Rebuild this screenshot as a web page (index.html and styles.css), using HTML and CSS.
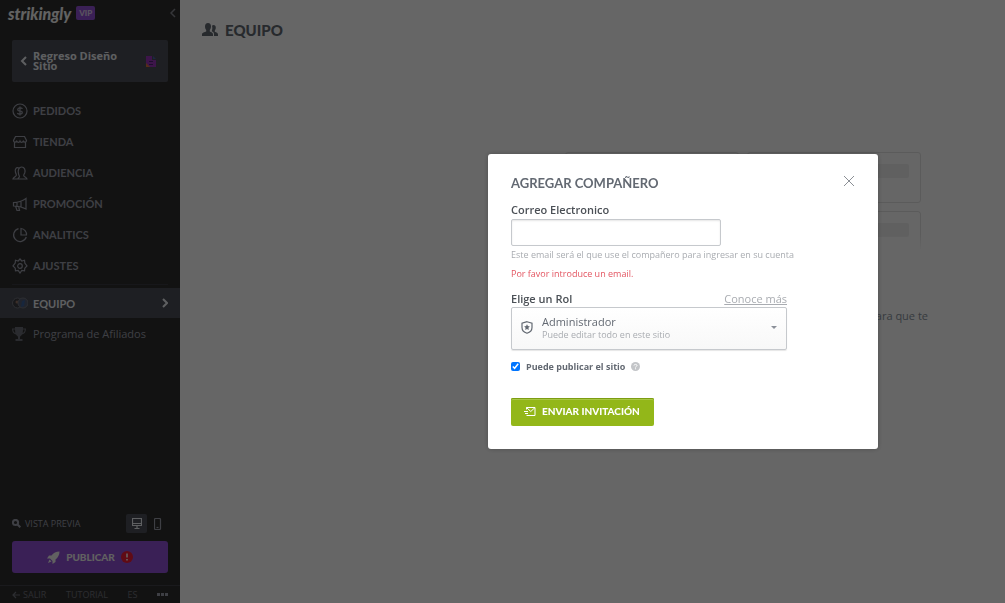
FILE: index.html
```
<!DOCTYPE html>
<html lang="es">
<head>
    <meta charset="UTF-8">
    <meta name="viewport" content="width=device-width, initial-scale=1.0">
    <title>Equipo - Strikingly</title>
    <link rel="stylesheet" href="styles.css">
</head>
<body>
    <div class="app">
        <aside class="sidebar">
            <div class="brand">
                <span class="logo">strikingly</span>
                <span class="vip">VIP</span>
                <button class="collapse" aria-label="Contraer menú">
                    <svg width="6" height="10" viewBox="0 0 6 10"><path d="M5 1L1 5l4 4"/></svg>
                </button>
            </div>

            <a class="site" href="#">
                <svg class="line site-back" width="7" height="10" viewBox="0 0 7 10"><path d="M6 1L2 5l4 4"/></svg>
                <span class="site-name">Regreso Diseño Sitio</span>
                <svg width="10" height="11" viewBox="0 0 10 11">
                    <path fill="#9a35b8" d="M0 0h6v4h4v7H0z"/>
                    <path fill="#d8703c" d="M0 7l4 4H0z"/>
                    <path fill="#4a5fa8" d="M7 0l3 3H7z"/>
                    <path stroke="#4b2473" d="M3 5.500h4M3 8.500h4"/>
                </svg>
            </a>

            <nav class="nav">
                <a class="nav-item" href="#">
                    <svg class="line" width="16" height="16" viewBox="0 0 16 16"><circle cx="8" cy="8" r="7"/><path d="M10.500 5.800C10 5 9 4.900 8 4.900c-3 0-3 3 0 3.100 3 .1 3 3.100 0 3.100-1.200 0-2.200-.2-2.700-1M8 3.500v9"/></svg>
                    PEDIDOS
                </a>
                <a class="nav-item" href="#">
                    <svg class="line" width="16" height="16" viewBox="0 0 16 16"><path d="M3.500 2.500h9l2 4c0 2-2.200 2.200-3.200.6-1 1.600-2.600 1.600-3.300 0-.7 1.600-2.300 1.600-3.300 0-1 1.600-3.200 1.400-3.200-.6zM2.500 8.500v5h11v-5"/></svg>
                    TIENDA
                </a>
                <a class="nav-item" href="#">
                    <svg class="line" width="16" height="16" viewBox="0 0 16 16"><path d="M7.500 11.500c-.2-1-1-1.500-1-3C5.500 5 7 2 9.700 2s4 3 3 6c-.5 1.200-1 1.500-1 2.500 0 1.500 3 1.500 3.300 3.500H6c0-1.200 1.500-1.300 1.500-2.500zM7 3C4.500 1.500 2.500 4 3.500 7.500c.3 1 1 1.500.8 2.800C4 11.500 1.500 12 1 14h5"/></svg>
                    AUDIENCIA
                </a>
                <a class="nav-item" href="#">
                    <svg class="line" width="16" height="16" viewBox="0 0 16 16"><path d="M1.500 6.500v3.500c3 0 7 0 12.500 3V2.500C9 6 5 6.500 1.500 6.500zM9 5v6M3.500 10l1.500 4.500h2.500L6.500 10M5 6.500V10"/></svg>
                    PROMOCIÓN
                </a>
                <a class="nav-item" href="#">
                    <svg class="line" width="16" height="16" viewBox="0 0 16 16"><path d="M6.500 1.700a6.500 6.500 0 1 0 7.800 8.300M9 1.500V8h5.500A6 6 0 0 0 9 1.500z"/></svg>
                    ANALITICS
                </a>
                <a class="nav-item" href="#">
                    <svg class="line" width="16" height="16" viewBox="0 0 16 16"><circle cx="8" cy="8" r="2.300"/><path d="M8 1l1.800 2 2.700-.8.3 2.800L15 8l-2.200 2.200-.3 2.700-2.700-.5L8 15l-1.800-2.600-2.700.5-.3-2.700L1 8l2.200-3 .3-2.800 2.700.8z"/></svg>
                    AJUSTES
                </a>
            </nav>

            <nav class="nav nav-bottom">
                <a class="nav-item active" href="#">
                    <svg width="16" height="12" viewBox="0 0 16 12">
                        <circle cx="5.500" cy="6" r="5" fill="#3d3d42" stroke="#71747e"/>
                        <circle cx="5" cy="5" r="1.500" fill="#967464"/>
                        <circle cx="11" cy="6" r="5" fill="#535b70" stroke="#71747e"/>
                        <path d="M9 10l1-6 3-1-1 6z" fill="#3a5f98"/>
                    </svg>
                    EQUIPO
                    <svg class="line arrow" width="7" height="10" viewBox="0 0 7 10"><path d="M2 1l4 4-4 4"/></svg>
                </a>
                <a class="nav-item plain" href="#">
                    <svg width="14" height="14" viewBox="0 0 14 14"><path fill="#6a6d75" d="M3 0h8v1.500h3C14 5 12.500 7 10 7.500 9 9 8 9 8 10v2h2.500v2h-7v-2H6v-2c0-1-1-1-2-2.500C1.500 7 0 5 0 1.500h3z"/><path fill="#2f2f2f" d="M1.200 2.600C1.400 4.500 2 5.500 3.300 6L3 2.600zM12.800 2.600H11L10.700 6c1.300-.5 1.900-1.500 2.100-3.400z"/></svg>
                    Programa de Afiliados
                </a>
            </nav>

            <div class="preview">
                <a class="preview-link" href="#">
                    <svg width="9" height="9" viewBox="0 0 9 9"><circle cx="3.500" cy="3.500" r="2.600"/><path d="M5.500 5.500L8.300 8.300"/></svg>
                    VISTA PREVIA
                </a>
                <button class="device selected" aria-label="Escritorio">
                    <svg class="line" width="10" height="11" viewBox="0 0 10 11"><path d="M.5.500h9v7h-9zM.5 5.500h9M5 7.500v3M2.500 10.500h5"/></svg>
                </button>
                <button class="device" aria-label="Móvil">
                    <svg class="line" width="8" height="12" viewBox="0 0 8 12"><rect x=".5" y=".5" width="6" height="11" rx="1"/><path d="M2.500 9.500h2"/></svg>
                </button>
            </div>
            <button class="publish">
                <svg width="13" height="13" viewBox="0 0 13 13"><path fill="#f2f2f2" d="M12.500.5C9 .5 6.500 2 4.500 4.500H2L0 7.500h3L5.500 10v3l3-2V8.500C11 6.500 12.500 4 12.500.5zM2.500 8.500L1 12l3.500-1.500z"/></svg>
                PUBLICAR
                <svg width="12" height="12" viewBox="0 0 12 12"><circle cx="6" cy="6" r="6" fill="#f01c35"/><path d="M6 2.500v4M6 8v1.500" stroke="#fff" stroke-width="1.500"/></svg>
            </button>
            <div class="sidebar-foot">
                <a href="#"><svg class="line" width="8" height="8" viewBox="0 0 8 8"><path d="M8 4H1M4 1L1 4l3 3"/></svg>SALIR</a>
                <a href="#">TUTORIAL</a>
                <a href="#">ES</a>
                <button aria-label="Más opciones"><svg width="11" height="3" viewBox="0 0 11 3"><path fill="#9b9eaa" d="M0 0h3v3H0zM4 0h3v3H4zM8 0h3v3H8z"/></svg></button>
            </div>
        </aside>

        <main class="content">
            <h1>
                <svg width="16" height="14" viewBox="0 0 16 14"><path fill="currentColor" d="M6 0c2 0 3 1.500 3 3.500 0 1.500-.6 2.700-1.200 3.500v1.500c1.500.8 3.200 1 3.200 3V13H0v-1.500c0-2 2.500-2.200 4.200-3V7C3.500 6.200 3 5 3 3.500 3 1.500 4 0 6 0zM11.500 2c1.500 0 2.300 1 2.300 2.700 0 1.200-.5 2.100-1 2.700v1.400c1.700.7 3.200 1 3.200 2.700V13h-4v-2c0-1.500-1-2.200-2.300-2.800C10.300 7 10.600 5 10 2.800c.4-.5.9-.8 1.500-.8z"/></svg>
                EQUIPO
            </h1>
            <div class="team-grid">
                <div class="team-card"><span></span></div>
                <div class="team-card"><span></span></div>
                <div class="team-card fade"><span></span></div>
                <div class="team-card fade"><span></span></div>
            </div>
            <p class="team-text">para que te</p>
        </main>
    </div>

    <div class="overlay">
        <form class="modal" role="dialog" aria-labelledby="modal-title">
            <header class="modal-head">
                <h2 id="modal-title">AGREGAR COMPAÑERO</h2>
                <button type="button" class="close" aria-label="Cerrar">
                    <svg width="10" height="10" viewBox="0 0 10 10"><path d="M0 0l10 10M10 0L0 10"/></svg>
                </button>
            </header>

            <label class="field-label" for="email">Correo Electronico</label>
            <input class="email" type="email" id="email">
            <p class="hint">Este email será el que use el compañero para ingresar en su cuenta</p>
            <p class="error">Por favor introduce un email.</p>

            <div class="role">
                <div class="role-head">
                    <label class="field-label" for="role">Elige un Rol</label>
                    <a href="#">Conoce más</a>
                </div>
                <div class="role-box">
                    <svg width="12" height="13" viewBox="0 0 12 13"><path fill="none" stroke="#636972" stroke-width="1.200" d="M6 .7l5 1.500v4.300c0 3-2.500 5-5 5.800-2.500-.8-5-2.800-5-5.800V2.200z"/><path fill="#636972" d="M6 3.200l.9 1.900 2 .3-1.500 1.400.4 2.100L6 7.900l-1.800 1 .4-2.100-1.500-1.400 2-.3z"/></svg>
                    <div class="role-text">
                        <select id="role">
                            <option>Administrador</option>
                        </select>
                        <span>Puede editar todo en este sitio</span>
                    </div>
                    <svg width="6" height="3" viewBox="0 0 6 3"><path fill="#8b9099" d="M0 0h6L3 3z"/></svg>
                </div>
            </div>

            <div class="check">
                <input type="checkbox" id="publish" checked>
                <label for="publish">Puede publicar el sitio</label>
                <svg width="9" height="9" viewBox="0 0 9 9"><circle cx="4.500" cy="4.500" r="4.500" fill="#c3c5c8"/><path fill="none" stroke="#fff" d="M3 3.500c0-1.500 3-1.500 3 0 0 1-1.500.8-1.500 2M4.500 6.300v1"/></svg>
            </div>

            <button type="submit" class="send">
                <svg width="12" height="9" viewBox="0 0 12 9"><path fill="none" stroke="#fff" d="M2.500 2.500v-2h8.500v8H2.500M2.500.5l4.300 4L11 .5M0 4.500h4M1 6.500h3"/></svg>
                ENVIAR INVITACIÓN
            </button>
        </form>
    </div>
</body>
</html>
```
FILE: styles.css
```
* {
    box-sizing: border-box;
}
body {
    margin: 0;
    font-family: "Open Sans", sans-serif;
    font-size: 11px;
    color: #636972;
    background: #fff;
}
button {
    font-family: inherit;
    padding: 0;
    border: none;
    background: none;
    cursor: pointer;
}
a {
    color: inherit;
    text-decoration: none;
}
svg {
    flex: none;
}
.line {
    fill: none;
    stroke: currentColor;
    stroke-width: 1.2;
}
.app {
    display: flex;
    min-height: 100vh;
}

/* sidebar */
.sidebar {
    display: flex;
    flex-direction: column;
    width: 180px;
    background: #2f2f2f;
    color: #9b9eaa;
}
.brand {
    display: flex;
    align-items: center;
    gap: 5px;
    height: 28px;
    padding: 0 4px 2px 8px;
}
.logo {
    font-family: Lato, sans-serif;
    font-size: 16px;
    font-weight: 900;
    font-style: italic;
    color: #f4f4f4;
}
.vip {
    padding: 0 3px;
    border-radius: 2px;
    background: #9251d6;
    color: #e0d2ef;
    font-family: Lato, sans-serif;
    font-size: 8px;
    font-weight: 900;
    line-height: 14px;
}
.collapse {
    margin-left: auto;
}
.collapse svg {
    fill: none;
    stroke: #85878f;
    stroke-width: 1.5;
}
.site {
    display: flex;
    align-items: center;
    height: 42px;
    margin: 12px 12px 13px;
    padding: 0 12px 0 8px;
    border-radius: 2px;
    background: #4b4e58;
    color: #eceef2;
}
.site-back {
    stroke-width: 2;
}
.site-name {
    flex: 1;
    margin: 0 16px 0 6px;
    font-weight: 700;
    line-height: 10px;
}
.nav-item {
    display: flex;
    align-items: center;
    gap: 5px;
    height: 31px;
    padding: 0 12px;
    font-family: Lato, sans-serif;
    font-size: 11px;
    font-weight: 700;
}
.nav-bottom {
    margin-top: 3px;
    padding-top: 4px;
    background: linear-gradient(#3a3b41, #3a3b41) 12px 0 / 156px 1px no-repeat;
}
.nav-item.active {
    height: 30px;
    background: #4b4e58;
    color: #eceef2;
}
.arrow {
    margin-left: auto;
    stroke-width: 2;
}
.nav-item.plain {
    gap: 7px;
    font-family: "Open Sans", sans-serif;
    font-size: 11px;
    font-weight: 400;
}
.preview {
    display: flex;
    align-items: center;
    margin: auto 12px 8px;
}
.preview-link {
    display: flex;
    flex: 1;
    align-items: center;
    gap: 4px;
    font-size: 9px;
}
.preview-link svg {
    fill: none;
    stroke: currentColor;
    stroke-width: 2;
}
.device {
    display: flex;
    align-items: center;
    justify-content: center;
    width: 21px;
    height: 19px;
    border-radius: 2px;
    color: #9b9eaa;
}
.device.selected {
    background: #4b4e58;
    color: #eceef2;
}
.publish {
    display: flex;
    align-items: center;
    justify-content: center;
    gap: 6px;
    height: 32px;
    margin: 0 12px 12px;
    border-radius: 3px;
    background: #9251d6;
    color: #f2f2f2;
    font-family: Lato, sans-serif;
    font-size: 10px;
    font-weight: 900;
}
.sidebar-foot {
    display: flex;
    align-items: center;
    justify-content: space-between;
    height: 18px;
    padding: 0 12px;
    border-top: 1px solid #42434a;
    color: #6f717a;
    font-size: 9px;
}
.sidebar-foot a,
.sidebar-foot button {
    display: flex;
    align-items: center;
    gap: 3px;
}

/* page */
.content {
    flex: 1;
    padding: 20px 84px 0 22px;
}
h1 {
    display: flex;
    align-items: center;
    gap: 7px;
    margin: 0;
    color: #636972;
    font-family: Lato, sans-serif;
    font-size: 15px;
    font-weight: 900;
    line-height: 20px;
}
.team-grid {
    display: grid;
    grid-template-columns: 1fr 1fr;
    gap: 8px;
    width: 356px;
    margin: 112px 0 0 auto;
}
.team-card {
    height: 51px;
    padding: 11px;
    border: 1px solid #e4e4e4;
    border-radius: 3px;
}
.team-card span {
    display: block;
    height: 14px;
    margin-left: 40px;
    border-radius: 2px;
    background: #f1f1f1;
}
.team-card.fade {
    height: 40px;
    border-bottom: none;
    mask-image: linear-gradient(#000 60%, transparent);
}
.team-text {
    margin: 56px -7px 0 0;
    color: #8a939e;
    text-align: right;
    line-height: 18px;
}

/* modal */
.overlay {
    position: fixed;
    inset: 0;
    display: flex;
    align-items: center;
    justify-content: center;
    padding-left: 361px;
    background: rgba(0, 0, 0, 0.6);
}
.modal {
    width: 390px;
    padding: 19px 23px 23px;
    border-radius: 3px;
    background: #fff;
    box-shadow: 0 0 5px rgba(0, 0, 0, 0.25);
}
.modal-head {
    display: flex;
    align-items: center;
    justify-content: space-between;
    height: 20px;
    margin-bottom: 8px;
}
.modal-head h2 {
    margin: 0;
    font-family: Lato, sans-serif;
    font-size: 13px;
    font-weight: 700;
}
.close {
    display: flex;
    padding: 0 1px 4px;
}
.close svg {
    stroke: #8b8f95;
}
.field-label {
    display: block;
    color: #4b5056;
    font-weight: 600;
    line-height: 18px;
}
.email {
    display: block;
    width: 210px;
    height: 27px;
    padding: 0 8px;
    border: 1px solid #c6c9cd;
    border-radius: 2px;
    box-shadow: inset 0 1px 2px rgba(0, 0, 0, 0.1);
}
.hint,
.error {
    margin: 0;
    font-size: 9px;
    line-height: 18px;
    color: #a9acb1;
}
.error {
    margin-top: 1px;
    color: #e35561;
}
.role {
    width: 276px;
    margin-top: 7px;
}
.role-head {
    display: flex;
    justify-content: space-between;
    height: 17px;
    line-height: 18px;
}
.role-head a {
    color: #a9acb1;
    text-decoration: underline;
}
.role-box {
    display: flex;
    align-items: center;
    gap: 9px;
    height: 43px;
    padding: 0 9px 2px;
    border: 1px solid #c6c9cd;
    border-radius: 2px;
    background: linear-gradient(#fff, #f8f8f8);
    box-shadow: 0 1px 1px rgba(0, 0, 0, 0.1);
}
.role-text {
    flex: 1;
    color: #a9acb1;
    font-size: 9px;
    line-height: 12px;
}
.role-text select {
    display: block;
    width: 100%;
    padding: 0;
    border: none;
    background: none;
    appearance: none;
    color: #636972;
    font-family: inherit;
    font-size: 11px;
    font-weight: 500;
    line-height: 14px;
}
.check {
    display: flex;
    align-items: center;
    gap: 6px;
    height: 16px;
    margin: 8px 0 24px;
    font-size: 9px;
    font-weight: 700;
}
.check input {
    width: 9px;
    height: 9px;
    margin: 0;
}
.send {
    display: flex;
    align-items: center;
    justify-content: center;
    gap: 6px;
    height: 28px;
    padding: 0 14px 2px 13px;
    border-radius: 2px;
    background: #93b719;
    box-shadow: inset 0 1px 0 #7d9d12, inset 0 2px 0 #a8c744;
    color: #fff;
    font-family: Lato, sans-serif;
    font-size: 10px;
    font-weight: 900;
}
```
